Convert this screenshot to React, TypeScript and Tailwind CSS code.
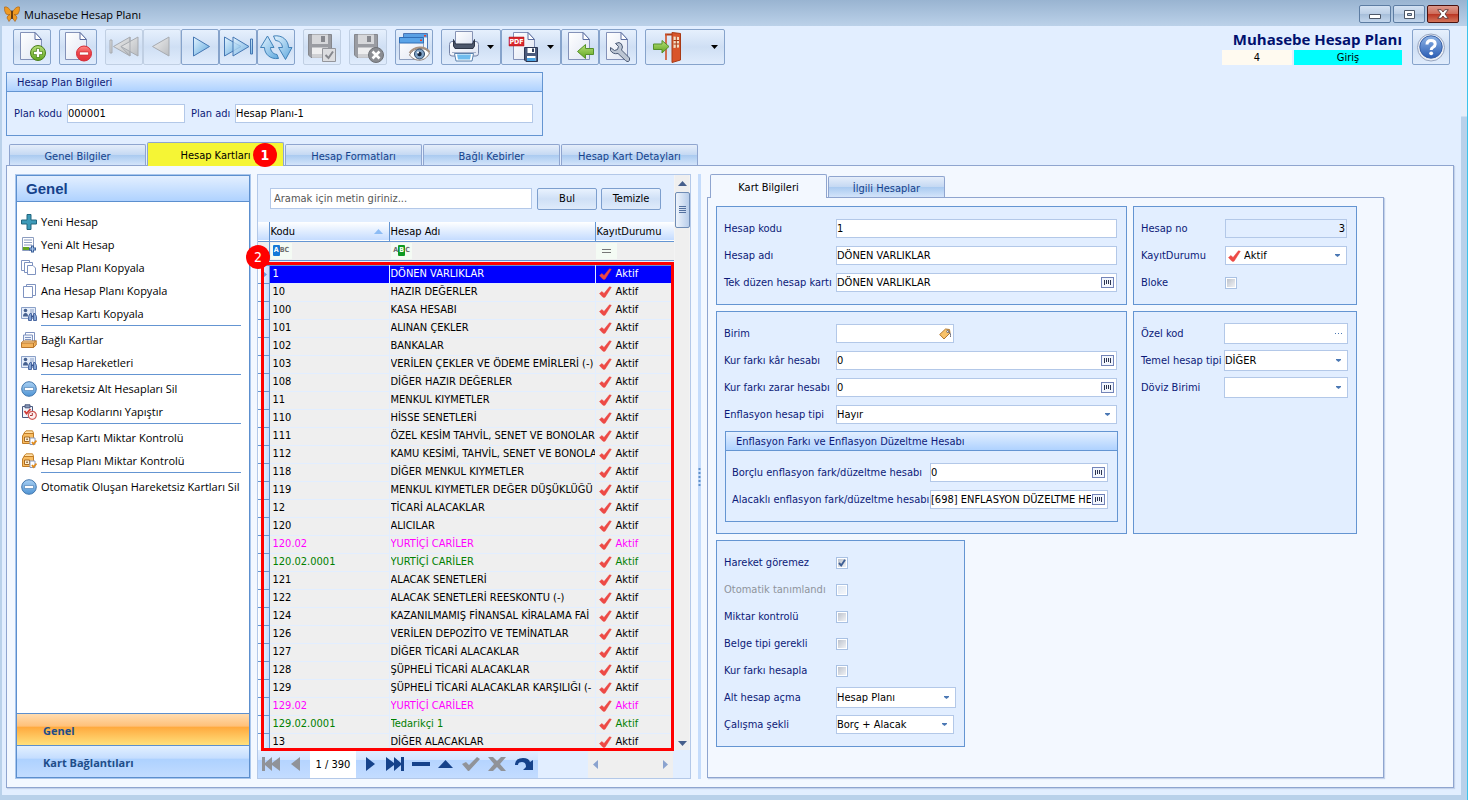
import React from "react";

const navy = "text-[#0c1a78]";
const tahoma = "font-['DejaVu_Sans_Condensed','DejaVu_Sans',sans-serif]";
const segoe = "font-['Open_Sans','Noto_Sans',sans-serif]";

/* ---------- drawing helpers ---------- */

function Defs() {
  return (
    <svg width="0" height="0" className="absolute" aria-hidden="true">
      <defs>
        <linearGradient id="page" x1="0" y1="0" x2="1" y2="1">
          <stop offset="0" stopColor="#ffffff" />
          <stop offset="1" stopColor="#dfe5f3" />
        </linearGradient>
        <linearGradient id="green" x1="0" y1="0" x2="0" y2="1">
          <stop offset="0" stopColor="#b7e07a" />
          <stop offset="1" stopColor="#5fa51e" />
        </linearGradient>
        <linearGradient id="red" x1="0" y1="0" x2="0" y2="1">
          <stop offset="0" stopColor="#ff8a86" />
          <stop offset="0.5" stopColor="#ee4247" />
          <stop offset="1" stopColor="#e0313a" />
        </linearGradient>
        <linearGradient id="sky" x1="0" y1="0" x2="1" y2="1">
          <stop offset="0" stopColor="#e4f4ff" />
          <stop offset="1" stopColor="#5fa8dd" />
        </linearGradient>
        <linearGradient id="gray" x1="0" y1="0" x2="1" y2="1">
          <stop offset="0" stopColor="#f0f0f0" />
          <stop offset="1" stopColor="#b9bcc0" />
        </linearGradient>
        <linearGradient id="blue" x1="0" y1="0" x2="0" y2="1">
          <stop offset="0" stopColor="#8fb4e6" />
          <stop offset="1" stopColor="#2a5db4" />
        </linearGradient>
        <linearGradient id="minus" x1="0" y1="0" x2="0" y2="1">
          <stop offset="0" stopColor="#a9d0f3" />
          <stop offset="1" stopColor="#4f94d4" />
        </linearGradient>
      </defs>
    </svg>
  );
}

function Sheet({ x = 7, y = 3 }: { x?: number; y?: number }) {
  return (
    <g transform={`translate(${x} ${y})`}>
      <path d="M.5.5H15L21.500 7.500V27.500H.5Z" fill="url(#page)" stroke="#8391b8" />
      <path d="M15 .5V7.500H21.500Z" fill="#fff" stroke="#5b6da0" strokeLinejoin="round" />
    </g>
  );
}

function GrayFloppy() {
  return (
    <g>
      <path d="M5.500 5.500H28.500V28.500H8L5.500 26Z" fill="#9a9ca2" stroke="#85878d" />
      <path d="M9 5.500H25V15H9Z" fill="#d6d7da" />
      <path d="M18 7H22V13H18Z" fill="#85878d" />
      <path d="M9 18.500H25V28.500H9Z" fill="#eeeeef" />
      <path d="M9 25H25V28.500H9Z" fill="#cfd0d3" />
    </g>
  );
}

const icons: Record<string, React.ReactNode> = {
  add: (
    <>
      <Sheet />
      <circle cx="25" cy="24" r="7.500" fill="url(#green)" stroke="#4a7d1c" />
      <path d="M25 19.500V28.500M20.500 24H29.500" stroke="#4a7d1c" strokeWidth="4" />
      <path d="M25 20V28M21 24H29" stroke="#fff" strokeWidth="2.400" />
    </>
  ),
  remove: (
    <>
      <Sheet x={6} />
      <circle cx="25" cy="24.500" r="7.500" fill="url(#red)" stroke="#d42a35" />
      <path d="M20.500 23H29.500V26H20.500Z" fill="#fff" stroke="#c5222c" strokeWidth=".6" />
    </>
  ),
  first: (
    <g fill="url(#gray)" stroke="#a7abb1" strokeLinejoin="round">
      <path d="M5 11H7V24H5Z" />
      <path d="M25 8V27L8.500 17.500Z" />
      <path d="M33 8V27L16 17.500Z" />
      <path d="M25 8V27L16 17.500" fill="none" />
    </g>
  ),
  prev: <path d="M26 8V27L9.500 17.500Z" fill="url(#gray)" stroke="#a7abb1" strokeLinejoin="round" />,
  next: <path d="M12.500 8V27L28.500 17.500Z" fill="url(#sky)" stroke="#4577b3" strokeLinejoin="round" />,
  last: (
    <g fill="url(#sky)" stroke="#4577b3" strokeLinejoin="round">
      <path d="M5.500 8V27L22 17.500Z" />
      <path d="M14 8V27L30 17.500Z" fillOpacity=".8" />
      <path d="M31.500 10H33.500V25H31.500Z" />
    </g>
  ),
  refresh: (
    <g fill="url(#sky)" stroke="#4181b8" strokeLinejoin="round">
      <path d="M3.500 18.500L10.500 7L17 18.500H13.500C13.500 22 16 25 20 25.500L21.500 29.500C13 30.500 7.500 25 7.500 18.500Z" />
      <path d="M35 18.500L28.500 30.500L21.500 18.500H25.500C25 14.500 23 12 18.500 11.500L16.500 7C26 5.500 31.500 12 31.500 18.500Z" />
    </g>
  ),
  save: (
    <>
      <GrayFloppy />
      <path d="M19.500 19.500H32.500V32.500H19.500Z" fill="#dcdde0" stroke="#94969c" />
      <path d="M22.500 26L25.500 29L30 22.500" fill="none" stroke="#85878d" strokeWidth="2" />
    </>
  ),
  saveCancel: (
    <>
      <GrayFloppy />
      <circle cx="27" cy="26" r="7.500" fill="#8b8d92" stroke="#6f7176" />
      <path d="M23.500 22.500L30.500 29.500M30.500 22.500L23.500 29.500" stroke="#fff" strokeWidth="2.600" />
    </>
  ),
  preview: (
    <>
      <path d="M8.500 4.500H32.500V22H8.500Z" fill="#eef5fd" stroke="#4c76b5" />
      <path d="M9 5H32V8.500H9Z" fill="#5aa0e4" />
      <path d="M4.500 8.500H28.500V30.500H4.500Z" fill="url(#page)" stroke="#8d9fc0" />
      <path d="M4.500 8.500H28.500V14H4.500Z" fill="#5aa4e8" stroke="#2f6fb8" />
      <path d="M25 10.500H27V12H25ZM29 6H31V7.500H29Z" fill="#e8402c" />
      <path d="M14.500 26C18 18.500 30 17 34.500 24C30.500 33 20 33.500 14.500 26Z" fill="#fff" stroke="#8f8078" />
      <path d="M14.500 24C19 17 30 16.500 34.500 23" fill="none" stroke="#a8917f" strokeWidth="1.800" />
      <circle cx="24.500" cy="25" r="5" fill="#7fa2c6" stroke="#2c4767" />
      <circle cx="24.500" cy="25" r="2.200" fill="#14233a" />
      <circle cx="23" cy="23.400" r="1" fill="#fff" />
    </>
  ),
  print: (
    <>
      <path d="M8.500 15.500Q8.500 12.500 11 12.500H35Q37.500 12.500 37.500 15.500V24.500Q37.500 27 35 27H11Q8.500 27 8.500 24.500Z" fill="url(#page)" stroke="#7583a6" />
      <path d="M14.500 2.500H31.500V16H14.500Z" fill="url(#page)" stroke="#8794b5" />
      <path d="M12.500 10.500L14.500 15H31.500L33.500 10.500V17L32 19.500H14L12.500 17Z" fill="#4d576b" stroke="#2d3546" />
      <path d="M11 23.500H35" stroke="#a6b1ca" />
      <path d="M13.500 24.500H32.500L31 32H15Z" fill="#fff" stroke="#5d82ad" />
      <path d="M16 25.500H30L29 30.500H17Z" fill="#6fbcee" />
    </>
  ),
  pdf: (
    <>
      <Sheet x={12} />
      <path d="M8 8H23V17H8Z" fill="#d8262c" stroke="#a9161b" strokeWidth=".5" />
      <text x="15.500" y="15" fontSize="7" fontWeight="bold" fill="#fff" textAnchor="middle" fontFamily="DejaVu Sans Condensed, sans-serif">PDF</text>
      <path d="M23.500 18.500H36.500V32.500H25L23.500 31Z" fill="#4a5a7c" stroke="#2b3654" />
      <path d="M26.500 19H34V24H26.500Z" fill="#fff" />
      <path d="M31 19.500H33V23H31Z" fill="#33415f" />
      <path d="M26 27H34.500V32H26Z" fill="#fff" />
      <path d="M26 29H34.500V32H26Z" fill="#4aa5e6" />
    </>
  ),
  import: (
    <>
      <Sheet />
      <path d="M16.500 22.500L24.500 15.500V19.500H32.500V25.500H24.500V29.500Z" fill="url(#green)" stroke="#55902a" strokeLinejoin="round" />
    </>
  ),
  settings: (
    <>
      <Sheet />
      <path d="M16.500 14.500L20 13.500Q23 14 23.500 18L22.500 21L30.500 29Q31 31.500 29.500 32.500Q28 33 26.500 31.500L19 24.500Q14 25.500 11.500 21.500L11.500 18.500L15.500 21.500L18.500 20.500L19.500 17.500Z" fill="#bcc5d3" stroke="#4b5a76" strokeLinejoin="round" />
    </>
  ),
  exit: (
    <>
      <path d="M20 5.500H29" stroke="#b23c16" strokeWidth="2" />
      <path d="M21 5V31" stroke="#d0522a" strokeWidth="1.600" />
      <path d="M27 3.500L35.500 4.500V31L27 33.500Z" fill="#d9542a" stroke="#a83a16" />
      <path d="M28.500 7.500L34 8V18.500L28.500 19Z" fill="#f3dcc4" />
      <path d="M31.300 7.500V19M28.500 11.500H34M28.500 15H34" stroke="#a83a16" />
      <path d="M24 17.500L17 11.500V15H8.500V20.500H17V24Z" fill="url(#green)" stroke="#55902a" strokeLinejoin="round" />
    </>
  ),
  help: (
    <>
      <circle cx="19" cy="18.500" r="13.500" fill="#e9edf4" stroke="#98a6c0" />
      <circle cx="19" cy="18" r="11.200" fill="url(#blue)" stroke="#3a62a8" />
      <path d="M15 15.500Q15 11.500 19 11.500Q23.200 11.500 23.200 15Q23.200 17 21 18.300Q19.200 19.300 19.200 21" fill="none" stroke="#fff" strokeWidth="3" />
      <circle cx="19.200" cy="24.300" r="1.900" fill="#fff" />
    </>
  ),
};

function ToolButton({ icon, label, disabled, width = "w-[38px]", vb = 36, caret }: { icon: string; label: string; disabled?: boolean; width?: string; vb?: number; caret?: boolean }) {
  return (
    <button
      type="button"
      aria-label={label}
      disabled={disabled}
      className={`flex h-9 shrink-0 items-center overflow-hidden rounded-[2px] border bg-linear-to-b from-[#e6f0fd] via-[#cfdff4] via-50% to-[#e0ecfc] ${width} ${disabled ? "border-[#c0cfe3]" : "border-[#86a3cb]"}`}
    >
      <svg width={vb} height="34" viewBox={`1 1 ${vb} 34`} className="shrink-0">
        {icons[icon]}
      </svg>
      {caret && (
        <svg width="7" height="4" viewBox="0 0 7 4" className="mr-[6px] ml-auto shrink-0">
          <path d="M0 0H7L3.500 4Z" fill="#000" />
        </svg>
      )}
    </button>
  );
}

function Check() {
  return (
    <svg width="13" height="12" viewBox="0 0 13 12" className="shrink-0">
      <path d="M.5 7.500L3 5.500L5 7.500L10.500.8L12.300 1.300L6 11.300H4Z" fill="#ee4a45" stroke="#e8403c" strokeWidth=".5" strokeLinejoin="round" />
    </svg>
  );
}

/* ---------- form pieces ---------- */

function LookupButton({ label }: { label: string }) {
  return (
    <button type="button" aria-label={label} className="mr-[2px] flex h-[11px] w-[13px] shrink-0 items-center justify-center border border-[#7384b8] bg-[#f2f6fd]">
      <svg width="7" height="5" viewBox="0 0 7 5">
        <path d="M.5 0V5M2.500 0V4M4.500 0V4M6.500 0V5" stroke="#2b3350" />
      </svg>
    </button>
  );
}

function Row({ id, label, children, labelW = "w-[112px]", muted }: { id: string; label: string; children: React.ReactNode; labelW?: string; muted?: boolean }) {
  return (
    <div className="flex h-[27px] items-center">
      <label htmlFor={id} className={`shrink-0 whitespace-nowrap ${labelW} ${muted ? "text-[#8f949c]" : navy}`}>
        {label}
      </label>
      {children}
    </div>
  );
}

function TextField({ id, value = "", width = "flex-1", height = "h-[19px]", bg = "bg-white", align = "", extra, readOnly }: { id: string; value?: string; width?: string; height?: string; bg?: string; align?: string; extra?: React.ReactNode; readOnly?: boolean }) {
  return (
    <div className={`flex min-w-0 items-center border border-[#b3c8e8] ${bg} ${height} ${width}`}>
      <input id={id} defaultValue={value} readOnly={readOnly} className={`h-full w-full min-w-0 flex-1 bg-transparent pr-px text-black outline-none ${align}`} />
      {extra}
    </div>
  );
}

function SelectField({ id, options, width = "flex-1", height = "h-[19px]", lead }: { id: string; options: string[]; width?: string; height?: string; lead?: React.ReactNode }) {
  return (
    <div className={`flex min-w-0 items-center border border-[#b3c8e8] bg-white ${height} ${width}`}>
      {lead}
      <select id={id} className="h-full min-w-0 flex-1 appearance-none bg-transparent pr-px text-black outline-none">
        {options.map((o) => (
          <option key={o}>{o}</option>
        ))}
      </select>
      <svg width="5" height="3" viewBox="0 0 5 3" className="mr-[6px] shrink-0">
        <path d="M0 0H5V1L2.500 3L0 1Z" fill="#4b78b4" />
      </svg>
    </div>
  );
}

function CheckField({ id, checked, disabled }: { id: string; checked?: boolean; disabled?: boolean }) {
  return (
    <span className="relative mt-px flex size-3 shrink-0">
      <input
        id={id}
        type="checkbox"
        defaultChecked={checked}
        disabled={disabled}
        className="peer size-3 appearance-none border border-[#a9c1e3] bg-linear-to-br from-[#b7bdc8] to-[#f7f8fa] shadow-[inset_0_0_0_1px_#fff] disabled:from-[#dbe5f3]"
      />
      <svg width="12" height="12" viewBox="0 0 12 12" className="pointer-events-none absolute inset-0 hidden peer-checked:block">
        <path d="M3 6L5.200 8.500L9 2.800" fill="none" stroke="#3f5f94" strokeWidth="1.900" />
      </svg>
    </span>
  );
}

function Box({ children, className = "" }: { children: React.ReactNode; className?: string }) {
  return <section className={`border border-[#6495d2] bg-[#e2eeff] ${className}`}>{children}</section>;
}

function GroupTitle({ children }: { children: React.ReactNode }) {
  return (
    <h2 className={`flex h-[19px] items-center border-b border-[#6495d2] bg-linear-to-b from-[#e3efff] to-[#afd2ff] pt-px pl-[10px] ${navy}`}>{children}</h2>
  );
}

/* ---------- left menu ---------- */

const menuIcons: Record<string, React.ReactNode> = {
  plus: <path d="M6 .5H10V6H15.500V10H10V15.500H6V10H.5V6H6Z" fill="#3d9ab8" stroke="#22667f" />,
  subAccount: (
    <>
      <path d="M1.500.5H12.500V13.500H1.500Z" fill="#fff" stroke="#8c9dc0" />
      <path d="M3 3H11M3 5.500H11M3 8H11" stroke="#8c9dc0" />
      <path d="M2 10H8V13H2Z" fill="#62a51f" />
      <path d="M11.500 8.500V15.500M8 12H15" stroke="#3a5f98" strokeWidth="3" />
      <path d="M11.500 9.500V14.500M9 12H14" stroke="#a9c6ea" />
    </>
  ),
  copy3: (
    <g fill="#fff" stroke="#7f93c0">
      <path d="M.5.5H8.500V10.500H.5Z" />
      <path d="M3.500 2.500H11.500V12.500H3.500Z" />
      <path d="M6.500 5.500H12L14.500 8V14.500H6.500Z" />
    </g>
  ),
  copy2: (
    <g fill="#fff" stroke="#7f93c0">
      <path d="M5.500 1.500H14.500V12.500H5.500Z" />
      <path d="M2.500 3.500H11.500V14.500H2.500Z" />
    </g>
  ),
  card: (
    <>
      <path d="M.5 1.500H14.500V12.500H.5Z" fill="#e6eefa" stroke="#8ba1c8" />
      <circle cx="4.500" cy="4.500" r="1.800" fill="#46618f" />
      <path d="M2 10.500Q2 7 4.500 7Q7 7 7 10.500Z" fill="#46618f" />
      <path d="M9 4H13M9 6H13" stroke="#8ba1c8" />
      <path d="M7.500 14.500V10.500L9 7.500H10.500V14.500ZM15.500 14.500V10.500L14 7.500H12.500V14.500Z" fill="#86a5d4" stroke="#4a68a2" />
      <path d="M10.500 10.500H12.500" stroke="#34508a" strokeWidth="2" />
    </>
  ),
  tray: (
    <>
      <path d="M4.500.5H13.500V9H4.500Z" fill="#fff" stroke="#7f93c0" />
      <path d="M2.500 3H11.500V10H2.500Z" fill="#eef3fb" stroke="#7f93c0" />
      <path d="M4 5.500H10M4 7.500H10" stroke="#7f93c0" />
      <path d="M.5 10.500L2.500 9H15L13 11.500H.5Z" fill="#ffdca4" stroke="#b9772c" />
      <path d="M.5 11H12.500V15.500H.5ZM12.500 11L15.200 8.500V13L12.500 15.500Z" fill="#f3b35c" stroke="#b9772c" />
    </>
  ),
  minus: (
    <>
      <circle cx="8" cy="8" r="7.300" fill="url(#minus)" stroke="#4478ae" />
      <path d="M3.500 6.500H12.500V9.500H3.500Z" fill="#fff" stroke="#4478ae" strokeWidth=".6" />
    </>
  ),
  paste: (
    <>
      <path d="M1.500 2.500H11.500V13.500H1.500Z" fill="#f1f4fa" stroke="#4a5a80" />
      <path d="M4 .8H9V3.800H4Z" fill="#8a99b8" stroke="#4a5a80" />
      <path d="M3.500 7L5.500 9.500L9.500 5" fill="none" stroke="#d23b36" strokeWidth="1.800" />
      <circle cx="11.300" cy="11.300" r="4" fill="#fdf0f0" stroke="#cf5a56" strokeWidth="1.200" />
      <path d="M11.300 9V11.500H9" fill="none" stroke="#a33" />
    </>
  ),
  control: (
    <>
      <path d="M3 3L5 .8H11.500L12.500 3V5H3Z" fill="#ffe0a8" stroke="#c98a35" />
      <path d="M1.500 6L3 3.500H12.500V13.500H1.500Z" fill="#f8bd62" stroke="#c07c28" />
      <path d="M3.500 7H8.500V11.500H3.500Z" fill="#fff1d6" stroke="#a86a22" />
      <path d="M5.300 8.500H6.800V10H5.300Z" fill="#7a5a30" />
      <path d="M9 8H14V14.500H9Z" fill="#fff" stroke="#8c9dc0" />
      <path d="M11 12L12.500 14L15.500 10.500" fill="none" stroke="#e08b1c" strokeWidth="1.800" />
    </>
  ),
};

const menuGroups: [string, string][][] = [
  [
    ["plus", "Yeni Hesap"],
    ["subAccount", "Yeni Alt Hesap"],
    ["copy3", "Hesap Planı Kopyala"],
    ["copy2", "Ana Hesap Planı Kopyala"],
    ["card", "Hesap Kartı Kopyala"],
  ],
  [
    ["tray", "Bağlı Kartlar"],
    ["card", "Hesap Hareketleri"],
  ],
  [
    ["minus", "Hareketsiz Alt Hesapları Sil"],
    ["paste", "Hesap Kodlarını Yapıştır"],
  ],
  [
    ["control", "Hesap Kartı Miktar Kontrolü"],
    ["control", "Hesap Planı Miktar Kontrolü"],
  ],
  [["minus", "Otomatik Oluşan Hareketsiz Kartları Sil"]],
];

function SideMenu() {
  return (
    <aside className="flex w-[236px] shrink-0 flex-col border border-[#a9c6ec] bg-white">
      <div className="flex min-h-0 flex-1 flex-col border border-[#5c8fce]">
        <h2 className="flex h-[26px] shrink-0 items-center border-b border-[#5c8fce] bg-linear-to-b from-[#e3efff] to-[#afd2ff] pl-[9px] font-['Liberation_Sans',Arial,sans-serif] text-[15px] font-bold text-[#15428b]">
          Genel
        </h2>
        <nav className={`flex-1 pt-2 pl-1 text-[11px] text-black ${segoe}`}>
          {menuGroups.map((group, i) => (
            <div key={i}>
              {i > 0 && <div className="mr-2 ml-5 h-[3px] border-t border-[#6495d2]" />}
              {group.map(([icon, text]) => (
                <a key={text} href="#" className="flex h-[23px] items-center gap-1 whitespace-nowrap">
                  <svg width="16" height="16" viewBox="0 0 16 16" className="shrink-0">
                    {menuIcons[icon]}
                  </svg>
                  <span className="pt-px">{text}</span>
                </a>
              ))}
            </div>
          ))}
        </nav>
        <button type="button" className={`h-8 shrink-0 border-t border-[#5c8fce] bg-[linear-gradient(#ffdcb0,#ffc078_40%,#ffa83c_41%,#ffe07c)] pt-[2px] pl-[26px] text-left text-[11px] font-bold text-[#204d89] ${segoe}`}>
          Genel
        </button>
        <button type="button" className={`h-8 shrink-0 border-t border-[#5c8fce] bg-[linear-gradient(#e3f0ff,#c4ddff_40%,#add1ff_41%,#c2dcff)] pt-[2px] pl-[26px] text-left text-[11px] font-bold text-[#204d89] ${segoe}`}>
          Kart Bağlantıları
        </button>
      </div>
    </aside>
  );
}

/* ---------- account grid ---------- */

const accounts: [string, string, string?][] = [
  ["1", "DÖNEN VARLIKLAR"],
  ["10", "HAZIR DEĞERLER"],
  ["100", "KASA HESABI"],
  ["101", "ALINAN ÇEKLER"],
  ["102", "BANKALAR"],
  ["103", "VERİLEN ÇEKLER VE ÖDEME EMİRLERİ (-)"],
  ["108", "DİĞER HAZIR DEĞERLER"],
  ["11", "MENKUL KIYMETLER"],
  ["110", "HİSSE SENETLERİ"],
  ["111", "ÖZEL KESİM TAHVİL, SENET VE BONOLARI"],
  ["112", "KAMU KESİMİ, TAHVİL, SENET VE BONOLA"],
  ["118", "DİĞER MENKUL KIYMETLER"],
  ["119", "MENKUL KIYMETLER DEĞER DÜŞÜKLÜĞÜ K"],
  ["12", "TİCARİ ALACAKLAR"],
  ["120", "ALICILAR"],
  ["120.02", "YURTİÇİ CARİLER", "text-[#ff00ff]"],
  ["120.02.0001", "YURTİÇİ CARİLER", "text-[#008000]"],
  ["121", "ALACAK SENETLERİ"],
  ["122", "ALACAK SENETLERİ REESKONTU (-)"],
  ["124", "KAZANILMAMIŞ FİNANSAL KİRALAMA FAİ"],
  ["126", "VERİLEN DEPOZİTO VE TEMİNATLAR"],
  ["127", "DİĞER TİCARİ ALACAKLAR"],
  ["128", "ŞÜPHELİ TİCARİ ALACAKLAR"],
  ["129", "ŞÜPHELİ TİCARİ ALACAKLAR KARŞILIĞI (-"],
  ["129.02", "YURTİÇİ CARİLER", "text-[#ff00ff]"],
  ["129.02.0001", "Tedarikçi 1", "text-[#008000]"],
  ["13", "DİĞER ALACAKLAR"],
];

function FilterBadge({ lead, hot, tail, color }: { lead?: string; hot: string; tail: string; color: string }) {
  return (
    <span className="ml-px flex h-4 w-[21px] items-center justify-center bg-[#f4fbf4] text-[7px] leading-none font-bold text-[#6d6d6d]">
      {lead}
      <span className={`flex h-[11px] w-[7px] items-center justify-center rounded-[1px] text-white ${color}`}>{hot}</span>
      {tail}
    </span>
  );
}

function NavGlyph({ d, w, color, label }: { d: string; w: number; color: string; label: string }) {
  return (
    <button type="button" aria-label={label} className="flex h-full items-center">
      <svg width={w} height="16" viewBox={`0 0 ${w} 16`}>
        <path d={d} fill={color} />
      </svg>
    </button>
  );
}

function AccountGrid() {
  const off = "#909399";
  const on = "#15428b";
  return (
    <section className="flex w-[434px] shrink-0 flex-col border border-[#b3c8e8] bg-[#e2eeff]">
      <div className="flex min-h-0 flex-1">
        <div className="flex w-[416px] shrink-0 flex-col">
          <form className="flex h-[47px] shrink-0 items-center gap-[4px] pl-3" onSubmit={(e) => e.preventDefault()}>
            <input aria-label="Arama" placeholder="Aramak için metin giriniz..." className="mr-px h-[21px] w-[262px] border border-[#b3c8e8] bg-white px-[3px] outline-none placeholder:text-[#555]" />
            {["Bul", "Temizle"].map((t) => (
              <button key={t} type="submit" className="h-[22px] w-[60px] rounded-[2px] border border-[#7d9fce] bg-linear-to-b from-[#e9f2fe] via-[#cfe0f6] via-50% to-[#dfebfb] pt-px text-black">
                {t}
              </button>
            ))}
          </form>
          <div className="relative min-h-0 flex-1">
            <div className="h-full overflow-hidden">
              <table className="w-full table-fixed border-collapse text-left">
                <colgroup>
                  <col className="w-[11px]" />
                  <col className="w-[120px]" />
                  <col className="w-[206px]" />
                  <col className="w-[79px]" />
                </colgroup>
                <thead>
                  <tr className="h-[19px] border-b border-[#6495d2] bg-linear-to-b from-white to-[#c5dcff]">
                    <th className="border-r border-[#6495d2] p-0" aria-label="Satır" />
                    <th className="border-r border-[#6495d2] p-0 pt-px font-normal">
                      <div className="flex items-center justify-between pr-[6px] pl-px">
                        Kodu
                        <svg width="9" height="5" viewBox="0 0 9 5"><path d="M4.500 0L9 5H0Z" fill="#8dbcf5" /></svg>
                      </div>
                    </th>
                    <th className="border-r border-[#6495d2] p-0 pt-px pl-px font-normal">Hesap Adı</th>
                    <th className="p-0 pt-px pl-px font-normal">KayıtDurumu</th>
                  </tr>
                  <tr className="h-[19px] border-b border-[#6495d2] bg-[#efefef]">
                    <td className="border-r border-[#6495d2] p-0" />
                    <td className="p-0"><FilterBadge hot="A" tail="BC" color="bg-[#1478d8]" /></td>
                    <td className="p-0 pl-px"><FilterBadge lead="A" hot="B" tail="C" color="bg-[#0e9a22]" /></td>
                    <td className="p-0">
                      <span className="ml-px flex h-4 w-[21px] items-center justify-center bg-[#f4fbf4]">
                        <svg width="9" height="4" viewBox="0 0 9 4"><path d="M0 .5H9M0 3.500H9" stroke="#777" /></svg>
                      </span>
                    </td>
                  </tr>
                  <tr className="h-[5px] border-b border-[#6495d2]"><td colSpan={4} className="p-0" /></tr>
                </thead>
                <tbody>
                  {accounts.map(([code, name, color], i) => {
                    const sel = i === 0;
                    return (
                      <tr key={code} className={`h-[18px] border-b border-[#e2eeff] ${sel ? "bg-[#0000ff] text-white" : "bg-[#efefef]"} ${color ?? ""}`}>
                        <td className="border-r border-b border-[#6495d2] bg-linear-to-r from-white to-[#c5dcff] p-0">
                          {sel && (
                            <svg width="4" height="7" viewBox="0 0 4 7" className="ml-[5px]"><path d="M0 0L4 3.500L0 7Z" fill="#6f9ad6" /></svg>
                          )}
                        </td>
                        <td className="border-r border-[#e2eeff] p-0 pl-[3px]">{code}</td>
                        <td className="overflow-hidden border-r border-[#e2eeff] p-0 pl-px">
                          <div className="overflow-hidden whitespace-nowrap">{name}</div>
                        </td>
                        <td className="p-0">
                          <div className="flex items-center gap-1 pl-[3px]">
                            <Check />
                            {"Aktif"}
                          </div>
                        </td>
                      </tr>
                    );
                  })}
                </tbody>
              </table>
            </div>
            <div className="pointer-events-none absolute top-[40px] right-0 -bottom-px left-[3px] border-[3px] border-[#ff0000]" />
            <span className="absolute top-[23px] left-[-12px] flex size-6 items-center justify-center rounded-full bg-[#ff0000] text-[14px] text-white">2</span>
          </div>
        </div>
        <div className="flex w-[16px] flex-col items-center border-x border-[#f3f3f3] bg-[#efefef]">
          <svg width="9" height="5" viewBox="0 0 9 5" className="mt-[6px]"><path d="M4.500 0L9 5H0Z" fill="#465f8c" /></svg>
          <div className="mt-[6px] flex h-[36px] w-[15px] items-center justify-center rounded-[2px] border border-[#6f8cb5] bg-linear-to-r from-[#eef4fc] to-[#b8cdea]">
            <svg width="7" height="8" viewBox="0 0 7 8"><path d="M0 .5H7M0 2.500H7M0 4.500H7M0 6.500H7" stroke="#53709f" /></svg>
          </div>
          <svg width="9" height="5" viewBox="0 0 9 5" className="mt-auto mb-[4px]"><path d="M0 0H9L4.500 5Z" fill="#465f8c" /></svg>
        </div>
      </div>
      <div className="flex h-[28px] shrink-0">
        <div className="flex h-full w-[280px] items-center gap-[10px] bg-[linear-gradient(#e2eeff,#d3e5ff_35%,#b5d4ff_36%,#c3dcff)] pl-[4px]">
          <NavGlyph label="İlk kayıt" w={19} color={off} d="M0 1H3V7L10 1V7L18 1V15L10 9V15L3 9V15H0Z" />
          <NavGlyph label="Önceki kayıt" w={9} color={off} d="M9 1V15L0 8Z" />
          <span className="flex h-full w-[46px] items-center justify-center bg-white pt-px whitespace-nowrap">1 / 390</span>
          <NavGlyph label="Sonraki kayıt" w={9} color={on} d="M0 1V15L9 8Z" />
          <div className="flex h-full items-center gap-2">
            <NavGlyph label="Son kayıt" w={19} color={on} d="M1 1V15L9 9V15L16 9V15H19V1H16V7L9 1V7Z" />
            <NavGlyph label="Kaydı sil" w={18} color={on} d="M0 6H18V10H0Z" />
            <NavGlyph label="Düzenle" w={15} color={on} d="M0 12H15L7.500 4Z" />
            <NavGlyph label="Onayla" w={19} color={off} d="M1 8L5 6L8 9L16 1L19 3L8 15H7Z" />
            <NavGlyph label="Vazgeç" w={18} color={off} d="M0 1H5L9 5L13 1H18L12 8L18 15H13L9 11L5 15H0L6 8Z" />
            <NavGlyph label="Yenile" w={20} color={on} d="M1 9Q1 2 9 2Q15 2 16 6L19 4V14H9L12 11Q12 6 8 6Q4 6 4 9Z" />
          </div>
        </div>
        <div className="mr-[17px] ml-auto flex w-[85px] items-center justify-between bg-[#efefef] px-[5px]">
          <svg width="5" height="9" viewBox="0 0 5 9"><path d="M5 0V9L0 4.500Z" fill="#8ba3cf" /></svg>
          <svg width="5" height="9" viewBox="0 0 5 9"><path d="M0 0V9L5 4.500Z" fill="#8ba3cf" /></svg>
        </div>
      </div>
    </section>
  );
}

/* ---------- card details ---------- */

function CardDetails() {
  return (
    <div className="flex min-w-0 flex-col pb-px">
      <div role="tablist" className="flex h-[23px] shrink-0 items-end gap-px pl-[3px]">
        <button type="button" role="tab" aria-selected="true" className="relative z-10 -mb-px h-[24px] w-[117px] rounded-t-[2px] border border-b-0 border-[#8fa5cf] bg-[#f3f8ff] pt-[2px] text-black">
          Kart Bilgileri
        </button>
        <button type="button" role="tab" aria-selected="false" className="h-[21px] w-[117px] rounded-t-[2px] border border-b-0 border-[#8fa5cf] bg-[linear-gradient(#e6eefa,#c5d9f3_48%,#a9caf0_50%,#d3e4fa)] pt-[3px] text-[#15428b]">
          İlgili Hesaplar
        </button>
      </div>
      <div className="flex w-[677px] flex-1 flex-col items-start gap-[6px] border border-[#8fa5cf] bg-[#f3f8ff] p-2 shadow-[1px_1px_1px_#c3d2ea]">
        <div className="flex gap-[6px]">
          <Box className="w-[411px] py-2 pr-[9px] pl-[7px]">
            <Row id="hk" label="Hesap kodu"><TextField id="hk" value="1" /></Row>
            <Row id="ha" label="Hesap adı"><TextField id="ha" value="DÖNEN VARLIKLAR" /></Row>
            <Row id="td" label="Tek düzen hesap kartı"><TextField id="td" value="DÖNEN VARLIKLAR" extra={<LookupButton label="Tek düzen kart seç" />} /></Row>
          </Box>
          <Box className="w-[224px] px-[7px] pt-2">
            <Row id="hn" label="Hesap no" labelW="w-[84px]"><TextField id="hn" value="3" width="w-[122px]" bg="bg-transparent" align="text-right" readOnly /></Row>
            <Row id="kd" label="KayıtDurumu" labelW="w-[84px]">
              <SelectField id="kd" options={["Aktif", "Pasif"]} width="w-[122px]" lead={<span className="mr-[3px] ml-[2px]"><Check /></span>} />
            </Row>
            <Row id="bl" label="Bloke" labelW="w-[84px]"><CheckField id="bl" /></Row>
          </Box>
        </div>
        <div className="flex gap-[6px]">
          <Box className="w-[411px] pt-2 pr-2 pb-[11px] pl-[7px]">
            <div className="pr-px">
              <Row id="br" label="Birim">
                <TextField
                  id="br"
                  width="w-[118px]"
                  extra={
                    <button type="button" aria-label="Birim seç" className="mr-[2px] shrink-0">
                      <svg width="12" height="12" viewBox="0 0 12 12">
                        <path d="M.7 6.500L6.500 1L10.500 1.500L11 5L5 11Z" fill="#f8c26a" stroke="#b07a35" />
                        <circle cx="8.800" cy="3.500" r="1.100" fill="#fff" stroke="#4a4a5a" strokeWidth=".7" />
                        <path d="M9 3.500Q12.500 5 11.500 9" fill="none" stroke="#6a6a7a" />
                      </svg>
                    </button>
                  }
                />
              </Row>
              <Row id="kk" label="Kur farkı kâr hesabı"><TextField id="kk" value="0" extra={<LookupButton label="Kâr hesabı seç" />} /></Row>
              <Row id="kz" label="Kur farkı zarar hesabı"><TextField id="kz" value="0" extra={<LookupButton label="Zarar hesabı seç" />} /></Row>
              <Row id="et" label="Enflasyon hesap tipi"><SelectField id="et" options={["Hayır", "Evet"]} /></Row>
            </div>
            <Box className="mt-[3px] ml-px">
              <GroupTitle>Enflasyon Farkı ve Enflasyon Düzeltme Hesabı</GroupTitle>
              <div className="py-2 pr-[9px] pl-[6px]">
                <Row id="be" label="Borçlu enflasyon fark/düzeltme hesabı" labelW="w-[198px]"><TextField id="be" value="0" extra={<LookupButton label="Borçlu hesap seç" />} /></Row>
                <Row id="ae" label="Alacaklı enflasyon fark/düzeltme hesabı" labelW="w-[198px]"><TextField id="ae" value="[698] ENFLASYON DÜZELTME HES" extra={<LookupButton label="Alacaklı hesap seç" />} /></Row>
              </div>
            </Box>
          </Box>
          <Box className="w-[224px] px-[7px] pt-2">
            <Row id="ok" label="Özel kod" labelW="w-[83px]">
              <TextField id="ok" width="w-[124px]" height="h-[21px]" extra={<button type="button" aria-label="Özel kod seç" className="mr-[5px] shrink-0"><svg width="7" height="1" viewBox="0 0 7 1" className="block"><path d="M0 .5H1M3 .5H4M6 .5H7" stroke="#4b78b4" /></svg></button>} />
            </Row>
            <Row id="tt" label="Temel hesap tipi" labelW="w-[83px]"><SelectField id="tt" options={["DİĞER"]} width="w-[124px]" height="h-[21px]" /></Row>
            <Row id="db" label="Döviz Birimi" labelW="w-[83px]"><SelectField id="db" options={[""]} width="w-[124px]" height="h-[21px]" /></Row>
          </Box>
        </div>
        <Box className="w-[249px] px-[7px] pt-2 pb-2">
          <Row id="hg" label="Hareket göremez"><CheckField id="hg" checked /></Row>
          <Row id="ot" label="Otomatik tanımlandı" muted><CheckField id="ot" disabled /></Row>
          <Row id="mk" label="Miktar kontrolü"><CheckField id="mk" /></Row>
          <Row id="bt" label="Belge tipi gerekli"><CheckField id="bt" /></Row>
          <Row id="kf" label="Kur farkı hesapla"><CheckField id="kf" /></Row>
          <Row id="al" label="Alt hesap açma"><SelectField id="al" options={["Hesap Planı"]} width="w-[120px]" height="h-[21px]" /></Row>
          <Row id="cs" label="Çalışma şekli"><SelectField id="cs" options={["Borç + Alacak"]} width="w-[118px]" /></Row>
        </Box>
      </div>
    </div>
  );
}

/* ---------- window ---------- */

const pageTabs = ["Genel Bilgiler", "Hesap Kartları", "Hesap Formatları", "Bağlı Kebirler", "Hesap Kart Detayları"];

function TitleBar() {
  const btn = "flex h-[18px] w-8 items-center justify-center rounded-[2px] border";
  return (
    <header className="flex h-[26px] shrink-0 items-center bg-linear-to-b from-[#99b4d1] to-[#bbd1e9] pr-[8px] pl-[4px]">
      <svg width="16" height="16" viewBox="0 0 16 16" className="mt-[2px] mr-1">
        <path d="M7.500 6Q4 0 .5 1Q0 5 2 8Q4 9 6 8.500Q3 9.500 3 12L5 15.500Q7.500 13 8 9.500Q8.500 13 11 15.500L13 12Q13 9.500 10 8.500Q12 9 14 8Q16 5 15.500 1Q12 0 8.500 6Z" fill="#ef9a22" stroke="#a35c14" strokeWidth=".6" />
        <path d="M8 4.500V13" stroke="#3c1d06" strokeWidth="1.400" />
      </svg>
      <h1 className={`flex-1 pt-[3px] text-[11px] text-black ${segoe}`}>Muhasebe Hesap Planı</h1>
      <div className="flex gap-[2px] pt-[2px]">
        <button type="button" aria-label="Simge durumuna küçült" className={`${btn} border-[#5d7da3] bg-[linear-gradient(#d3e2f3,#bccfe6_48%,#a5bdd9_50%,#c3d6ec)]`}>
          <svg width="12" height="5" viewBox="0 0 12 5" className="mt-1"><path d="M.5.5H11.500V4.500H.5Z" fill="#fff" stroke="#4c5768" /></svg>
        </button>
        <button type="button" aria-label="Önceki boyut" className={`${btn} border-[#5d7da3] bg-[linear-gradient(#d3e2f3,#bccfe6_48%,#a5bdd9_50%,#c3d6ec)]`}>
          <svg width="11" height="9" viewBox="0 0 11 9"><path d="M.5.5H10.500V8.500H.5Z" fill="#fff" stroke="#4c5768" /><path d="M3.500 3.500H7.500V5.500H3.500Z" fill="#b3c7df" stroke="#4c5768" /></svg>
        </button>
        <button type="button" aria-label="Kapat" className={`${btn} border-[#4a1210] bg-[linear-gradient(#dd9a8d,#cf6d5b_48%,#b93422_50%,#d4745a)]`}>
          <svg width="12" height="10" viewBox="0 0 12 10"><path d="M.7.700H4.200L6 3L7.800.7H11.300L8 5L11.300 9.300H7.800L6 7L4.200 9.300H.7L4 5Z" fill="#fff" stroke="#5b3a3a" strokeWidth=".9" /></svg>
        </button>
      </div>
    </header>
  );
}

export default function App() {
  return (
    <div lang="tr" className={`flex h-screen min-h-[640px] flex-col border-r border-[#3cc3ec] bg-[#b9d1ea] text-[11px] leading-[14px] ${tahoma}`}>
      <Defs />
      <TitleBar />
      <div className="flex min-h-0 flex-1">
        <div className="mb-[5px] ml-[2px] flex min-h-0 min-w-0 flex-1 flex-col bg-[#e2eeff] pb-[7px]">
          <div className="flex h-[46px] shrink-0 pt-[3px] pr-[11px] pl-[11px]">
            <div className="flex gap-2">
              <ToolButton icon="add" label="Yeni" />
              <ToolButton icon="remove" label="Sil" />
              <div className="flex">
                <ToolButton icon="first" label="İlk" disabled />
                <ToolButton icon="prev" label="Önceki" disabled />
                <ToolButton icon="next" label="Sonraki" />
                <ToolButton icon="last" label="Son" />
                <ToolButton icon="refresh" label="Yenile" />
              </div>
              <ToolButton icon="save" label="Kaydet" disabled />
              <ToolButton icon="saveCancel" label="Vazgeç" disabled />
              <ToolButton icon="preview" label="Önizleme" />
              <div className="flex">
                <ToolButton icon="print" label="Yazdır" width="w-[60px]" vb={40} caret />
                <ToolButton icon="pdf" label="PDF kaydet" width="w-[60px]" vb={40} caret />
                <ToolButton icon="import" label="İçe aktar" />
                <ToolButton icon="settings" label="Ayarlar" />
              </div>
              <ToolButton icon="exit" label="Çıkış" width="w-[80px]" vb={40} caret />
            </div>
            <div className="mr-[10px] ml-auto flex flex-col items-end">
              <div className={`h-[21px] text-[15px] leading-5 font-bold text-[#00106e] ${segoe}`}>Muhasebe Hesap Planı</div>
              <div className="flex gap-[2px] text-center text-black">
                <span className="h-[15px] w-[70px] bg-[#fffaf0] leading-4">4</span>
                <span className="h-[15px] w-[108px] bg-[#00ffff] leading-4">Giriş</span>
              </div>
            </div>
            <ToolButton icon="help" label="Yardım" />
          </div>

          <Box className="ml-1 w-[537px] shrink-0">
            <GroupTitle>Hesap Plan Bilgileri</GroupTitle>
            <div className="flex h-[43px] items-center pr-[9px] pl-[7px]">
              <label htmlFor="pk" className={`w-[53px] ${navy}`}>Plan kodu</label>
              <TextField id="pk" value="000001" width="w-[118px]" />
              <label htmlFor="pa" className={`ml-[6px] w-[44px] ${navy}`}>Plan adı</label>
              <TextField id="pa" value="Hesap Planı-1" />
            </div>
          </Box>

          <div role="tablist" className="mt-[8px] flex h-[21px] shrink-0 items-end gap-px pl-[7px]">
            {pageTabs.map((t) =>
              t === "Hesap Kartları" ? (
                <button key={t} type="button" role="tab" aria-selected="true" className="relative z-10 -mb-px h-[24px] w-[137px] rounded-t-[2px] border border-b-0 border-[#8fa5cf] bg-[#f5f535] pt-[2px] text-black">
                  {t}
                  <span className="absolute top-0 right-[6px] flex size-6 items-center justify-center rounded-full bg-[#ff0000] text-[14px] font-bold text-white">1</span>
                </button>
              ) : (
                <button key={t} type="button" role="tab" aria-selected="false" className="h-[21px] w-[137px] rounded-t-[2px] border border-b-0 border-[#8fa5cf] bg-[linear-gradient(#e6eefa,#c5d9f3_48%,#a9caf0_50%,#d3e4fa)] pt-[3px] text-[#15428b]">
                  {t}
                </button>
              ),
            )}
          </div>

          <main className="mr-[7px] ml-[4px] flex min-h-0 flex-1 border border-[#8fa5cf] bg-[#f3f8ff] px-2 py-2 shadow-[1px_1px_1px_#c3d2ea]">
            <SideMenu />
            <div className="w-[6px] shrink-0" />
            <AccountGrid />
            <div className="flex w-[16px] shrink-0 items-center pl-[7px]">
              <div className="flex h-full w-[3px] items-center bg-[#c5dcfb]">
                <svg width="3" height="20" viewBox="0 0 3 20"><path d="M1.500 1V20" stroke="#5f8fca" strokeWidth="2" strokeDasharray="2 2" /></svg>
              </div>
            </div>
            <CardDetails />
          </main>
        </div>
        <div className="w-[6px] shrink-0 bg-[linear-gradient(#e6eefa_90px,#b9d1ea_91px)]" />
      </div>
    </div>
  );
}
